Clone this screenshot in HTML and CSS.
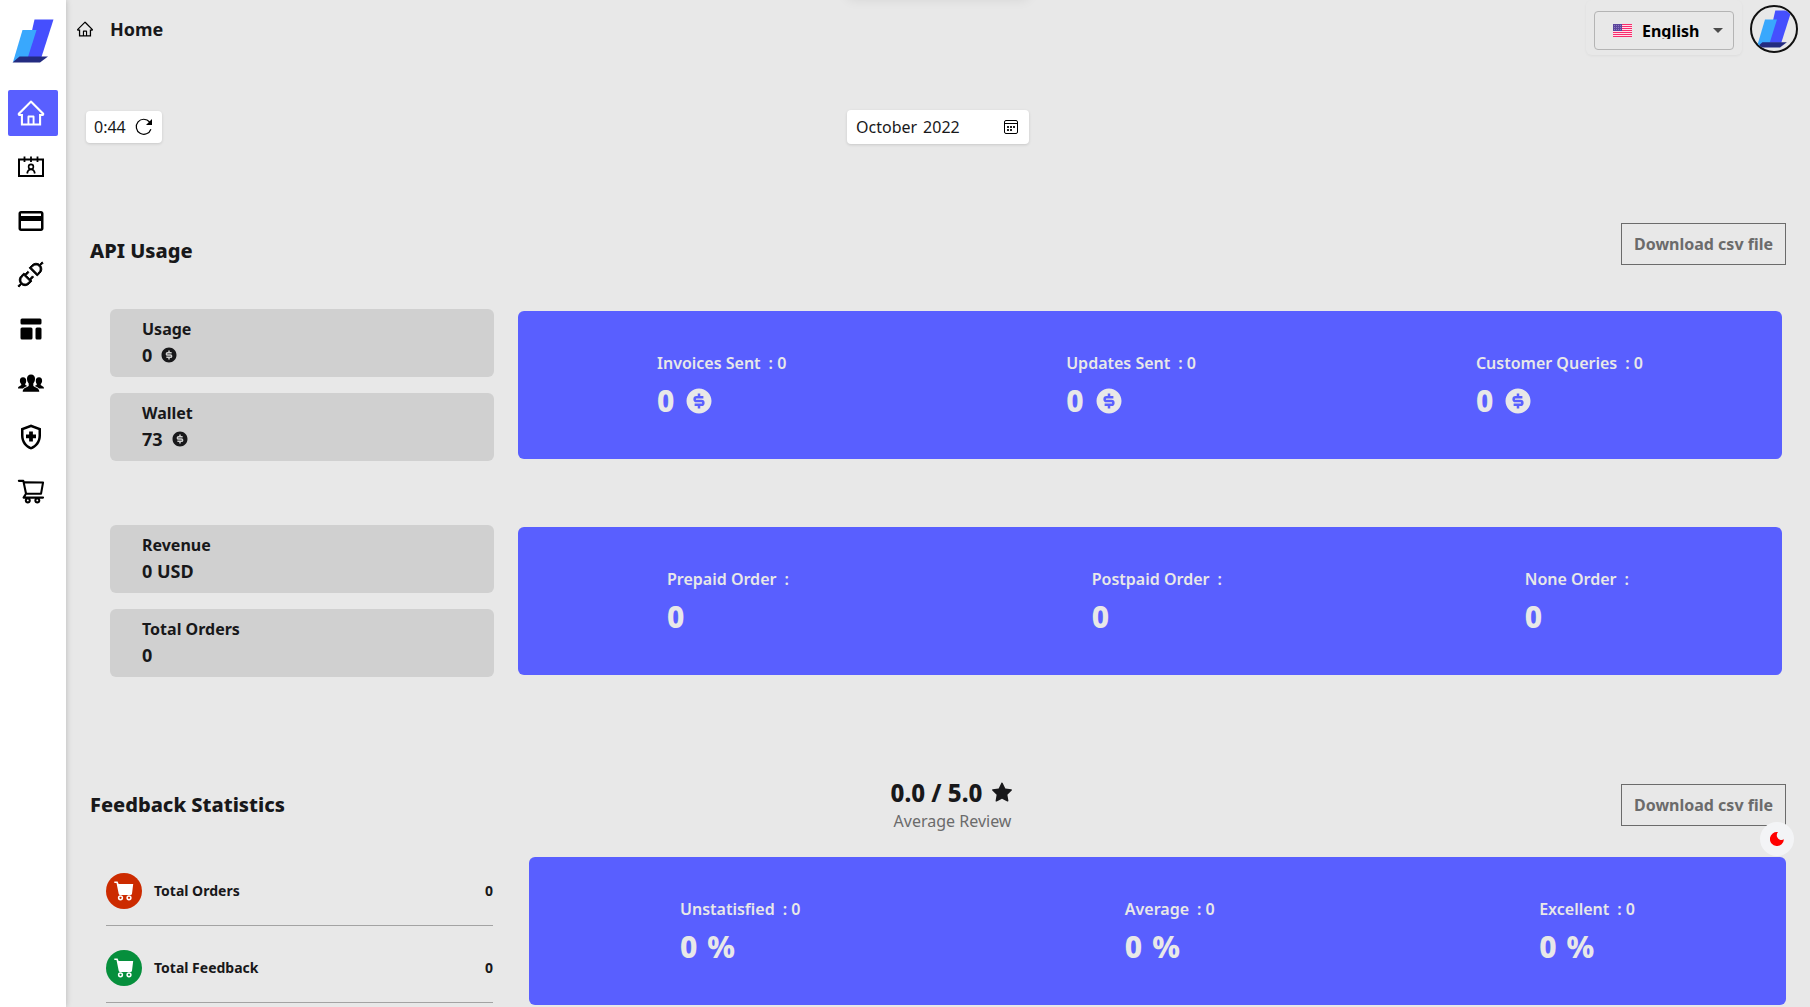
FILE: index.html
```html
<!DOCTYPE html>
<html lang="en">
<head>
<meta charset="utf-8">
<title>Home</title>
<link rel="stylesheet" href="styles.css">
</head>
<body>
<svg class="defs" aria-hidden="true">
  <symbol id="logo" viewBox="0 0 42 44">
    <path fill="#454ffe" d="M22.5.5H41.500L29.500 38H14z"/>
    <path fill="#39a8fd" d="M10.500 11H24.500L16 38 1 43z"/>
    <path fill="#232b80" d="M7.500 37.500H36L28 43.500H.5z"/>
  </symbol>
  <symbol id="home" viewBox="0 0 1024 1024"><path d="M946.5 505L560.1 118.8l-25.900-25.900a31.500 31.500 0 0 0-44.400 0L77.500 505a63.900 63.900 0 0 0-18.800 46c.4 35.200 29.700 63.300 64.900 63.300h42.500V940h691.800V614.300h43.400c17.100 0 33.200-6.700 45.300-18.800a63.600 63.600 0 0 0 18.700-45.300c0-17-6.700-33.100-18.800-45.200zM568 868H456V664h112v204zm217.900-325.700V868H632V640c0-22.100-17.900-40-40-40H432c-22.100 0-40 17.900-40 40v228H238.100V542.300h-96l370-369.700 23.100 23.100L882 542.300h-96.100z"/></symbol>
  <symbol id="coin" viewBox="0 0 24 24"><path d="M12 22C6.477 22 2 17.523 2 12S6.477 2 12 2s10 4.477 10 10-4.477 10-10 10zm-3.500-8v2H11v2h2v-2h1a2.500 2.500 0 1 0 0-5h-4a.5.5 0 1 1 0-1h5.500V8H13V6h-2v2h-1a2.500 2.500 0 0 0 0 5h4a.5.5 0 1 1 0 1H8.500z"/></symbol>
  <symbol id="cart-fill" viewBox="0 0 20 20"><path d="M.3.4H3.600L4.600 2.900H19.200L18 12.700Q17.800 14 16.500 14H6.200Q5 14 4.700 12.800L2.500 2H.3z"/><g fill="none" stroke="#fff" stroke-width="1.500"><circle cx="6.500" cy="16.800" r="1.900"/><circle cx="15" cy="16.800" r="1.900"/></g></symbol>
</svg>

<aside class="sidebar">
  <svg class="brand"><use href="#logo"/></svg>
  <nav class="nav">
    <a class="nav-item active"><svg class="nav-icon"><use href="#home"/></svg></a>
    <a class="nav-item"><svg class="nav-icon" viewBox="0 0 30 30" fill="none" stroke="#000" stroke-width="2"><path d="M3 7.500H27V24H3z"/><path d="M8.500 4.500V10M15 4.500V10M21.500 4.500V10" stroke-width="1.800"/><circle cx="15" cy="14.800" r="2.400" stroke-width="1.600"/><path d="M11.200 21.500Q11.800 17.400 15 17.400T18.800 21.500" stroke-width="1.800"/></svg></a>
    <a class="nav-item"><svg class="nav-icon" viewBox="0 0 24 24"><path d="M20 4H4c-1.110 0-1.990.89-1.990 2L2 18c0 1.110.89 2 2 2h16c1.110 0 2-.89 2-2V6c0-1.110-.89-2-2-2zm0 14H4v-6h16v6zm0-10H4V6h16v2z"/></svg></a>
    <a class="nav-item"><svg class="nav-icon" viewBox="0 0 16 16" stroke="#000" stroke-width=".5"><path fill-rule="evenodd" d="M13.617 3.844a2.870 2.870 0 0 0-.451-.868l1.354-1.360L13.904 1l-1.360 1.354a2.877 2.877 0 0 0-.868-.452 3.073 3.073 0 0 0-2.140.075 3.030 3.030 0 0 0-.991.664L7 4.192l4.327 4.328 1.552-1.545c.287-.287.508-.618.663-.992a3.074 3.074 0 0 0 .075-2.140zm-.889 1.804a2.150 2.150 0 0 1-.471.705l-.93.93-3.090-3.090.93-.93a2.150 2.150 0 0 1 .704-.472 2.134 2.134 0 0 1 1.689.007c.264.114.494.271.69.472.2.195.358.426.472.69a2.134 2.134 0 0 1 .007 1.688zm-4.824 4.994l1.484-1.545-.616-.622-1.490 1.551-1.860-1.859 1.491-1.552L6.291 6 4.808 7.545l-.616-.615-1.551 1.545a3 3 0 0 0-.663.998 3.023 3.023 0 0 0-.233 1.169c0 .332.05.656.15.97.105.31.258.597.459.862L1 13.834l.615.615 1.360-1.353c.265.2.552.353.862.458.314.1.638.15.97.15.406 0 .796-.077 1.170-.232.378-.155.71-.376.998-.663l1.545-1.552-.616-.615zm-2.262 2.023a2.160 2.160 0 0 1-.834.164c-.301 0-.586-.057-.855-.17a2.278 2.278 0 0 1-.697-.466 2.280 2.280 0 0 1-.465-.697 2.167 2.167 0 0 1-.17-.854 2.160 2.160 0 0 1 .642-1.545l.93-.93 3.090 3.090-.93.93a2.220 2.220 0 0 1-.711.478z"/></svg></a>
    <a class="nav-item"><svg class="nav-icon" viewBox="0 0 20 20"><path d="M3 4a1 1 0 011-1h12a1 1 0 011 1v2a1 1 0 01-1 1H4a1 1 0 01-1-1V4zM3 10a1 1 0 011-1h6a1 1 0 011 1v6a1 1 0 01-1 1H4a1 1 0 01-1-1v-6zM14 9a1 1 0 00-1 1v6a1 1 0 001 1h2a1 1 0 001-1v-6a1 1 0 00-1-1h-2z"/></svg></a>
    <a class="nav-item"><svg class="nav-icon" viewBox="0 0 30 30"><path d="M15 6.500c2.600 0 4 1.700 4 4.200 0 2-.8 3.700-1.700 4.700v2.300c.6 1.500 6 1.600 6 6H6.700c0-4.400 5.400-4.500 6-6v-2.300c-.9-1-1.700-2.700-1.700-4.700 0-2.500 1.400-4.200 4-4.200z"/><path d="M7 9.200c2.200 0 3.200 1.500 3.200 3.500 0 1.500-.4 2.600-1.100 3.400.1 1.200 1 1.400 2.200 1.900-1.500.7-3.300 1.300-4.300 2.500H2c0-2.600 3-2.300 3.300-3.700l-.1-.9c-.9-.9-1.300-1.700-1.300-3.200 0-2 .9-3.500 3.100-3.500z"/><path d="M23 9.200c-2.200 0-3.200 1.500-3.200 3.500 0 1.500.4 2.600 1.100 3.400-.1 1.200-1 1.400-2.200 1.900 1.500.7 3.300 1.300 4.300 2.500h5c0-2.600-3-2.300-3.300-3.700l.1-.9c.9-.9 1.300-1.700 1.300-3.200 0-2-.9-3.500-3.100-3.500z"/></svg></a>
    <a class="nav-item"><svg class="nav-icon" viewBox="0 0 24 24"><path d="M10.500 13H8v-3h2.500V7.500h3V10H16v3h-2.500v2.500h-3V13zM12 2L4 5v6.090c0 5.050 3.410 9.760 8 10.910 4.590-1.150 8-5.860 8-10.910V5l-8-3zm6 9.090c0 4-2.550 7.700-6 8.830-3.450-1.130-6-4.820-6-8.830v-4.700l6-2.250 6 2.250v4.700z"/></svg></a>
    <a class="nav-item"><svg class="nav-icon" viewBox="0 0 1024 1024"><path d="M922.900 701.900H327.400l29.900-60.900 496.800-.9c16.800 0 31.200-12 34.200-28.600l68.800-385.100c1.800-10.100-.9-20.500-7.500-28.400a34.990 34.990 0 0 0-26.600-12.500l-632-2.100-5.400-25.400c-3.400-16.200-18-28-34.600-28H96.500a35.300 35.300 0 1 0 0 70.600h125.900L246 312.800l58.100 281.300-74.800 122.100a34.960 34.960 0 0 0-3 36.800c6 11.900 18.100 19.400 31.500 19.400h62.800a102.430 102.430 0 0 0-20.600 61.700c0 56.600 46 102.600 102.600 102.600s102.600-46 102.600-102.600c0-22.300-7.400-44-20.600-61.700h161.100a102.430 102.430 0 0 0-20.600 61.700c0 56.600 46 102.600 102.600 102.600s102.600-46 102.600-102.600c0-22.300-7.400-44-20.600-61.700H923c19.400 0 35.300-15.800 35.300-35.300a35.420 35.420 0 0 0-35.400-35.200zM305.700 253l575.800 1.900-56.400 315.800-452.300.8L305.700 253zm96.900 612.700c-17.400 0-31.600-14.200-31.600-31.600 0-17.400 14.200-31.600 31.600-31.600s31.600 14.200 31.600 31.600a31.600 31.600 0 0 1-31.600 31.600zm325.100 0c-17.400 0-31.600-14.200-31.600-31.600 0-17.400 14.200-31.600 31.600-31.600s31.600 14.200 31.600 31.600a31.600 31.600 0 0 1-31.600 31.600z"/></svg></a>
  </nav>
</aside>

<main class="main">
  <header class="header">
    <svg class="crumb-icon"><use href="#home"/></svg>
    <h1 class="crumb">Home</h1>
    <div class="lang-box">
      <div class="lang">
        <svg class="flag" viewBox="0 0 19 13"><path fill="#fff" d="M0 0h19v13H0z"/><path stroke="#f5004f" d="M0 .5h19M0 2.500h19M0 4.500h19M0 6.500h19M0 8.500h19M0 10.500h19M0 12.500h19"/><path fill="#ff8fb4" opacity=".3" d="M0 0h19v13H0z"/><path fill="#5b459c" d="M0 0h9v7H0z"/><path stroke="#8d7cc0" stroke-dasharray="1 1" d="M1 1.500h8M1 3.500h8M1 5.500h8"/></svg>
        <span class="lang-name">English</span>
        <svg class="caret" viewBox="0 0 10 5"><path d="M0 0h10L5 5z"/></svg>
      </div>
    </div>
    <div class="avatar"><svg class="avatar-logo"><use href="#logo"/></svg></div>
  </header>

  <div class="toolbar">
    <div class="timer"><span>0:44</span><svg class="refresh" viewBox="0 0 20 20"><path d="M15.600 5A7.500 7.500 0 1 0 16.900 12.200" fill="none" stroke="#000" stroke-width="1.200"/><path d="M18 2V8H12z"/></svg></div>
    <div class="month"><span>October</span><span>2022</span><svg class="cal" viewBox="0 0 14 14"><rect x=".5" y=".5" width="13" height="13" rx="1.500" fill="none" stroke="#000"/><path stroke="#000" d="M1 3.500h12"/><path stroke="#222" stroke-width="2" stroke-dasharray="2 1" d="M3 7h8M3 10h5"/></svg></div>
  </div>

  <section class="head head-usage">
    <h2 class="title">API Usage</h2>
    <button class="download">Download csv file</button>
  </section>

  <section class="stats">
    <div class="cards">
      <div class="card"><span class="card-label">Usage</span><span class="card-value">0<svg class="coin-sm"><use href="#coin"/></svg></span></div>
      <div class="card"><span class="card-label">Wallet</span><span class="card-value">73<svg class="coin-sm"><use href="#coin"/></svg></span></div>
    </div>
    <div class="panel panel-usage">
      <div class="metric"><div class="metric-label"><span>Invoices Sent</span><span>: 0</span></div><div class="metric-value">0<svg class="coin-lg"><use href="#coin"/></svg></div></div>
      <div class="metric"><div class="metric-label"><span>Updates Sent</span><span>: 0</span></div><div class="metric-value">0<svg class="coin-lg"><use href="#coin"/></svg></div></div>
      <div class="metric"><div class="metric-label"><span>Customer Queries</span><span>: 0</span></div><div class="metric-value">0<svg class="coin-lg"><use href="#coin"/></svg></div></div>
    </div>
  </section>

  <section class="stats">
    <div class="cards">
      <div class="card"><span class="card-label">Revenue</span><span class="card-value">0 USD</span></div>
      <div class="card"><span class="card-label">Total Orders</span><span class="card-value">0</span></div>
    </div>
    <div class="panel panel-orders">
      <div class="metric"><div class="metric-label"><span>Prepaid Order</span><span>:</span></div><div class="metric-value">0</div></div>
      <div class="metric"><div class="metric-label"><span>Postpaid Order</span><span>:</span></div><div class="metric-value">0</div></div>
      <div class="metric"><div class="metric-label"><span>None Order</span><span>:</span></div><div class="metric-value">0</div></div>
    </div>
  </section>

  <section class="head head-feedback">
    <h2 class="title">Feedback Statistics</h2>
    <div class="rating">
      <div class="score"><span>0.0 / 5.0</span><svg class="star" viewBox="0 0 1024 1024"><path d="M908.100 353.100l-253.900-36.900L540.700 86.100c-3.100-6.300-8.200-11.400-14.500-14.500-15.800-7.800-35-1.300-42.900 14.500L369.800 316.200l-253.900 36.900c-7 1-13.400 4.300-18.300 9.300a32.050 32.050 0 0 0 .6 45.300l183.700 179.100-43.400 252.900a31.950 31.950 0 0 0 46.400 33.700L512 754l227.100 119.400c6.200 3.300 13.400 4.400 20.300 3.200 17.400-3 29.100-19.500 26.100-36.900l-43.400-252.900 183.700-179.100c5-4.900 8.300-11.300 9.300-18.300 2.700-17.500-9.500-33.700-27-36.300z"/></svg></div>
      <div class="score-label">Average Review</div>
    </div>
    <button class="download">Download csv file</button>
  </section>

  <section class="feedback">
    <ul class="totals">
      <li class="total"><span class="badge badge-red"><svg class="badge-icon"><use href="#cart-fill"/></svg></span><span class="total-name">Total Orders</span><span>0</span></li>
      <li class="total"><span class="badge badge-green"><svg class="badge-icon"><use href="#cart-fill"/></svg></span><span class="total-name">Total Feedback</span><span>0</span></li>
    </ul>
    <div class="panel panel-feedback">
      <div class="metric"><div class="metric-label"><span>Unstatisfied</span><span>: 0</span></div><div class="metric-value"><span>0</span><span>%</span></div></div>
      <div class="metric"><div class="metric-label"><span>Average</span><span>: 0</span></div><div class="metric-value"><span>0</span><span>%</span></div></div>
      <div class="metric"><div class="metric-label"><span>Excellent</span><span>: 0</span></div><div class="metric-value"><span>0</span><span>%</span></div></div>
    </div>
  </section>
</main>

<div class="toast"></div>
<button class="theme"><svg class="moon" viewBox="0 0 14 14"><path d="M8 .1A7 7 0 1 0 13.900 7.200C12.500 8.300 10 8.300 8.300 6.700 6.300 4.900 6.300 2.100 8 .1z"/></svg></button>
</body>
</html>
```
FILE: styles.css
```css
* { box-sizing: border-box; }
body {
  margin: 0;
  height: 1007px;
  overflow: hidden;
  display: flex;
  background: #e8e8e8;
  color: #18181a;
  font-family: "Noto Sans", sans-serif;
  font-size: 16px;
  line-height: 24px;
}
svg { display: block; flex: none; }
h1, h2, ul { margin: 0; padding: 0; }
button { font-family: inherit; cursor: pointer; }
.defs { position: absolute; width: 0; height: 0; }

.sidebar {
  width: 66px;
  height: 1007px;
  flex: none;
  padding: 19px 8px 0;
  background: #fff;
  box-shadow: 0 0 6px rgba(0, 0, 0, .22);
}
.brand { width: 42px; height: 44px; margin-left: 4px; }
.nav { display: flex; flex-direction: column; gap: 8px; margin-top: 27px; }
.nav-item { width: 50px; height: 46px; padding: 8px; border-radius: 2px; }
.nav-item.active { background: #595fff; fill: #fff; }
.nav-icon { width: 30px; height: 30px; }

.main { flex: 1; height: 1007px; overflow: hidden; }
.header { display: flex; height: 58px; padding: 0 12px 0 10px; align-items: flex-start; }
.crumb-icon { width: 18px; height: 18px; margin-top: 20px; }
.crumb { margin: 17px 0 0 16px; font-size: 18px; line-height: 25px; font-weight: 700; }
.lang-box {
  margin-left: auto;
  width: 156px;
  height: 55px;
  padding: 11px 8px 0;
  border-radius: 6px;
  box-shadow: 0 1px 3px rgba(0, 0, 0, .05);
}
.lang {
  display: flex;
  align-items: center;
  height: 39px;
  padding: 0 10px 0 18px;
  border: 1px solid #b4b4b4;
  border-radius: 4px;
  color: #000;
}
.flag { width: 19px; height: 13px; }
.lang-name { margin-left: 10px; height: 17px; line-height: 18px; font-weight: 700; overflow: hidden; }
.caret { width: 10px; height: 5px; margin-left: auto; fill: #4c4c4c; }
.avatar {
  width: 48px;
  height: 48px;
  margin: 5px 0 0 8px;
  border: 2px solid #111;
  border-radius: 50%;
  overflow: hidden;
}
.avatar-logo { width: 36px; height: 38px; margin: 3px 0 0 4px; }

.toolbar { display: grid; grid-template-columns: 1fr auto 1fr; align-items: center; height: 34px; margin-top: 52px; padding: 0 20px; }
.timer, .month {
  display: flex;
  align-items: center;
  background: #fff;
  border-radius: 4px;
  box-shadow: 0 1px 3px rgba(0, 0, 0, .14);
}
.timer { justify-self: start; width: 76px; height: 32px; padding-left: 8px; gap: 8px; }
.refresh { width: 20px; height: 20px; }
.month { width: 182px; height: 34px; padding: 0 11px 0 9px; gap: 6px; }
.cal { width: 14px; height: 14px; margin-left: auto; }

.head { display: grid; grid-template-columns: 1fr auto 1fr; padding: 0 24px; height: 42px; }
.title { grid-column: 1; font-size: 20px; line-height: 28px; font-weight: 800; }
.head-usage { margin-top: 79px; }
.head-usage .title { margin-top: 14px; }
.head-feedback { margin-top: 107px; }
.head-feedback .title { margin-top: 7px; }
.download {
  grid-column: 3;
  justify-self: end;
  width: 165px;
  height: 42px;
  padding: 0;
  border: 1px solid #6b6b6b;
  background: none;
  color: #6b6b6b;
  font-size: 16px;
  font-weight: 700;
}

.stats { display: flex; gap: 24px; align-items: center; margin-top: 44px; padding: 0 28px 0 44px; }
.stats + .stats { margin-top: 64px; }
.cards { display: flex; flex-direction: column; gap: 16px; width: 384px; }
.card { display: flex; flex-direction: column; height: 68px; padding: 8px 32px; border-radius: 6px; background: #d0d0d0; font-weight: 700; }
.card-value { display: flex; align-items: center; gap: 8px; font-size: 18px; line-height: 28px; }
.coin-sm { width: 18px; height: 18px; fill: #18181a; }

.panel { flex: 1; display: flex; justify-content: space-between; height: 148px; border-radius: 6px; background: #595fff; color: #e8e8e8; }
.panel-usage { padding: 40px 139px 0; }
.panel-orders { padding: 40px 153px 0 149px; }
.panel-feedback { padding: 40px 151px 0; }
.metric-label { display: flex; gap: 8px; font-weight: 600; }
.metric-value { display: flex; align-items: center; gap: 10px; margin-top: 6px; font-size: 30px; line-height: 40px; font-weight: 800; }
.coin-lg { width: 30px; height: 30px; fill: #e8e8e8; }

.rating { grid-column: 2; display: flex; flex-direction: column; align-items: center; margin: -8px 0 0 29px; }
.score { display: flex; align-items: center; gap: 8px; font-size: 24px; line-height: 34px; font-weight: 800; }
.star { width: 24px; height: 24px; fill: #18181a; }
.score-label { color: #6b6b6b; line-height: 22px; }

.feedback { display: flex; justify-content: space-between; gap: 36px; margin-top: 31px; padding: 0 24px 0 40px; }
.totals { width: 387px; list-style: none; }
.total { display: flex; align-items: center; height: 77px; padding-top: 7px; border-bottom: 1px solid #a3a3a3; font-size: 14px; font-weight: 700; }
.total:first-child { height: 69px; padding-top: 0; }
.badge { display: flex; align-items: center; justify-content: center; width: 36px; height: 36px; border-radius: 50%; }
.badge-red { background: #cc2b00; }
.badge-green { background: #068f3c; }
.badge-icon { width: 20px; height: 20px; fill: #fff; }
.total-name { flex: 1; margin-left: 12px; }

.toast {
  position: fixed;
  top: -40px;
  left: 846px;
  width: 184px;
  height: 38px;
  border-radius: 8px;
  box-shadow: 0 2px 12px rgba(0, 0, 0, .08);
}
.theme {
  position: fixed;
  left: 1760px;
  top: 822px;
  width: 34px;
  height: 34px;
  padding: 0 0 0 10px;
  border: 0;
  border-radius: 50%;
  background: #f3f4f6;
}
.moon { width: 14px; height: 14px; fill: #f00; }
```
